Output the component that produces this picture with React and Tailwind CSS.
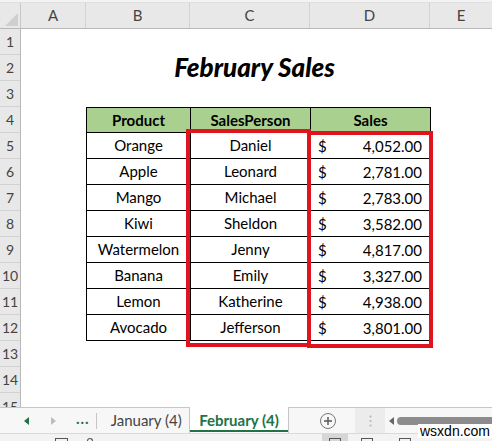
import React from 'react';

// sheet data
const rows = [
  { product: 'Orange', person: 'Daniel', sales: '4,052.00' },
  { product: 'Apple', person: 'Leonard', sales: '2,781.00' },
  { product: 'Mango', person: 'Michael', sales: '2,783.00' },
  { product: 'Kiwi', person: 'Sheldon', sales: '3,582.00' },
  { product: 'Watermelon', person: 'Jenny', sales: '4,817.00' },
  { product: 'Banana', person: 'Emily', sales: '3,327.00' },
  { product: 'Lemon', person: 'Katherine', sales: '4,938.00' },
  { product: 'Avocado', person: 'Jefferson', sales: '3,801.00' },
];

const rowNums = [1, 2, 3, 4, 5, 6, 7, 8, 9, 10, 11, 12, 13, 14];

export default function App() {
  return (
    <div
      className="relative w-[492px] h-[441px] overflow-hidden bg-white flex flex-col text-[#222]"
      style={{ fontFamily: 'Lato, "Open Sans", sans-serif' }}
    >
      {/* top strip */}
      <div className="h-[3px] bg-[#f3f3f3] border-b border-[#e0e0e0] shrink-0" />

      {/* column headers */}
      <div className="flex h-[26px] shrink-0 bg-[#e8e8e8] border-b border-[#b8b8b8] text-[15px] text-[#444]">
        <div className="w-[21px] relative border-r border-[#c8c8c8]">
          <div className="absolute right-[2px] bottom-[2px] w-0 h-0 border-l-[13px] border-l-transparent border-b-[13px] border-b-[#cfcfcf]" />
        </div>
        <div className="w-[65px] flex items-center justify-center border-r border-[#d2d2d2]">A</div>
        <div className="w-[104px] flex items-center justify-center border-r border-[#d2d2d2]">B</div>
        <div className="w-[120px] flex items-center justify-center border-r border-[#d2d2d2]">C</div>
        <div className="w-[120px] flex items-center justify-center border-r border-[#d2d2d2]">D</div>
        <div className="flex-1 flex items-center justify-center">E</div>
      </div>

      {/* sheet body */}
      <div className="flex flex-1 min-h-0 overflow-hidden">
        {/* row numbers */}
        <div className="w-[21px] shrink-0 bg-[#e8e8e8] border-r border-[#b8b8b8] flex flex-col text-[14px] text-[#444]">
          {rowNums.map((n) => (
            <div key={n} className="h-[26px] shrink-0 flex items-center justify-center border-b border-[#d2d2d2]">
              {n}
            </div>
          ))}
          <div className="h-[26px] shrink-0 flex items-start justify-center pt-[3px]">15</div>
        </div>

        {/* cells */}
        <div className="flex-1 flex flex-col">
          <div className="h-[26px] shrink-0" />
          <div className="h-[26px] shrink-0 flex items-end">
            <div className="ml-[65px] w-[344px] flex justify-center pr-[7px]">
              <span className="text-[26px] font-black italic leading-none text-black pb-[1px]">February Sales</span>
            </div>
          </div>
          <div className="h-[26px] shrink-0" />

          <div className="ml-[65px] w-[345px] border-l border-t border-black text-[15px] text-black">
            <div className="flex h-[25px] bg-[#a9d08e] font-bold">
              <div className="w-[104px] border-r border-b border-black flex items-center justify-center">Product</div>
              <div className="w-[120px] border-r border-b border-black flex items-center justify-center">SalesPerson</div>
              <div className="w-[120px] border-r border-b border-black flex items-center justify-center">Sales</div>
            </div>
            {rows.map((r) => (
              <div key={r.product} className="flex h-[26px]">
                <div className="w-[104px] border-r border-b border-black flex items-center justify-center">{r.product}</div>
                <div className="w-[120px] border-r border-b border-black flex items-center justify-center">{r.person}</div>
                <div className="w-[120px] border-r border-b border-black flex items-center justify-between pl-[7px] pr-[8px] pt-[2px]">
                  <span>$</span>
                  <span>{r.sales}</span>
                </div>
              </div>
            ))}
          </div>
        </div>
      </div>

      {/* sheet tabs */}
      <div className="h-[26px] shrink-0 flex bg-[#f7f7f7] text-[15px]">
        <div className="w-[189px] flex items-center border-t border-[#c6c6c6]">
          <div className="w-[50px] flex justify-center pl-[2px]">
            <div className="w-0 h-0 border-y-[4px] border-y-transparent border-r-[5px] border-r-[#217346]" />
          </div>
          <div className="w-[6px] flex justify-center">
            <div className="w-0 h-0 border-y-[4px] border-y-transparent border-l-[5px] border-l-[#bdbdbd]" />
          </div>
          <div className="ml-[20px] text-[#217346] font-bold tracking-[1px] pb-[4px]">...</div>
          <div className="ml-[6px] w-px h-[16px] bg-[#c6c6c6]" />
          <div className="ml-[14px] text-[#444]">January (4)</div>
        </div>
        <div className="w-[100px] bg-white border-x border-[#c6c6c6] relative flex items-center justify-center">
          <span className="text-[#217346] font-bold">February (4)</span>
          <div className="absolute left-0 right-0 bottom-[1px] h-[2px] bg-[#217346]" />
        </div>
        <div className="flex-1 flex items-center border-t border-[#c6c6c6]">
          <div className="ml-[31px] w-[16px] h-[16px] rounded-full border border-[#777] flex items-center justify-center">
            <svg width="10" height="10" viewBox="0 0 10 10">
              <path d="M5 1v8M1 5h8" stroke="#555" strokeWidth="1.4" />
            </svg>
          </div>
          <div className="ml-[19px] w-[30px] self-stretch bg-[#ececec] flex items-center justify-center">
            <svg width="3" height="12" viewBox="0 0 3 12">
              <circle cx="1.5" cy="1.5" r="1" fill="#b0b0b0" />
              <circle cx="1.5" cy="6" r="1" fill="#b0b0b0" />
              <circle cx="1.5" cy="10.5" r="1" fill="#b0b0b0" />
            </svg>
          </div>
          <div className="ml-[4px] w-0 h-0 border-y-[4px] border-y-transparent border-r-[5px] border-r-[#666]" />
          <div className="ml-[3px] flex-1 h-[8px] rounded-l-full bg-[#8c8c8c]" />
        </div>
      </div>

      {/* status bar, mostly cut off */}
      <div className="h-[8px] shrink-0 bg-[#f3f3f3] border-t border-[#dadada] flex items-end overflow-hidden">
        <div className="ml-[55px] w-[13px] h-[3px] border-t border-x border-[#555]" />
        <div className="ml-[19px] w-[6px] h-[3px] border-t border-x border-[#555] rounded-t-full" />
        <div className="ml-[229px] w-[26px] h-[7px] bg-[#d6d6d6] flex justify-center items-end">
          <div className="w-[12px] h-[3px] border-t border-x border-[#555]" />
        </div>
        <div className="ml-[13px] w-[12px] h-[3px] border-t border-x border-[#555]" />
        <div className="ml-[26px] w-[12px] h-[3px] border-t border-x border-[#555]" />
      </div>

      {/* red highlight boxes */}
      <div className="absolute left-[186px] top-[129px] w-[125px] h-[218px] border-[4px] border-[#e0141e]" />
      <div className="absolute left-[307px] top-[131px] w-[126px] h-[217px] border-[4px] border-[#e0141e]" />

      {/* watermark */}
      <div
        className="absolute left-[418px] top-[424px] bg-white px-[2px] text-[14px] leading-[14px] text-black"
        style={{ fontFamily: '"Liberation Sans", Arial, sans-serif' }}
      >
        wsxdn.com
      </div>
    </div>
  );
}
